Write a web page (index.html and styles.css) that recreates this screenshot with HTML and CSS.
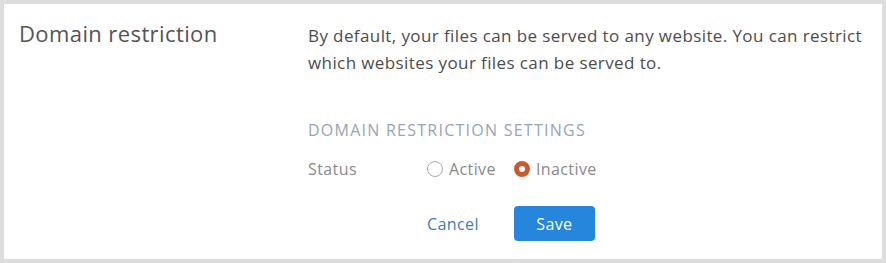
FILE: index.html
```html
<!DOCTYPE html>
<html lang="en">
<head>
    <meta charset="UTF-8">
    <title>Domain restriction</title>
    <link rel="stylesheet" href="styles.css">
</head>
<body>
    <div class="panel">
        <div class="panel-label">Domain restriction</div>
        <div class="panel-body">
            <p class="intro">By default, your files can be served to any website. You can restrict which websites your files can be served to.</p>

            <div class="settings">
                <h4>DOMAIN RESTRICTION SETTINGS</h4>
                <div class="field">
                    <span class="field-name">Status</span>
                    <div class="options">
                        <label class="radio"><span class="dot"></span>Active</label>
                        <label class="radio checked"><span class="dot"></span>Inactive</label>
                    </div>
                </div>
                <div class="actions">
                    <a href="#" class="cancel">Cancel</a>
                    <button class="save">Save</button>
                </div>
            </div>
        </div>
    </div>
</body>
</html>
```

FILE: styles.css
```css
html, body {
    margin: 0;
    height: 100%;
}
body {
    font-family: 'Open Sans', 'Noto Sans', sans-serif;
    background: #fff;
    border: 4px solid #dddddd;
    box-sizing: border-box;
    color: #4a4a4a;
}
.panel {
    display: flex;
    padding: 18px 15px;
}
.panel-label {
    width: 289px;
    font-size: 22px;
    line-height: 22px;
    letter-spacing: 0.4px;
    color: #555;
}
.panel-body {
    flex: 1;
}
.intro {
    margin: 0;
    font-size: 17px;
    line-height: 27px;
    letter-spacing: 0.4px;
    color: #4d4d4d;
}
.settings {
    margin-top: 44px;
}
.settings h4 {
    margin: 0 0 19px 0;
    font-weight: normal;
    font-size: 16px;
    line-height: 20px;
    letter-spacing: 1.25px;
    color: #97a5b5;
}
.field {
    display: flex;
    align-items: center;
    height: 20px;
    font-size: 16px;
    letter-spacing: 0.4px;
    color: #8a8a8a;
}
.field-name {
    width: 119px;
}
.options {
    display: flex;
    gap: 18px;
}
.radio {
    display: flex;
    align-items: center;
    gap: 6px;
    color: #8a8a8a;
}
.dot {
    width: 16px;
    height: 16px;
    border: 1px solid #aaa;
    border-radius: 50%;
    box-sizing: border-box;
}
.radio.checked .dot {
    border: 5px solid #c95a30;
    background: #fff;
}
.actions {
    display: flex;
    align-items: center;
    gap: 35px;
    margin-top: 27px;
    padding-left: 119px;
}
.cancel {
    color: #3b7dc4;
    text-decoration: none;
    font-size: 16px;
    letter-spacing: 0.4px;
}
.save {
    width: 81px;
    height: 35px;
    border: none;
    border-radius: 4px;
    background: #2586dc;
    color: #fff;
    font-family: inherit;
    font-size: 16px;
    letter-spacing: 0.4px;
}
```
